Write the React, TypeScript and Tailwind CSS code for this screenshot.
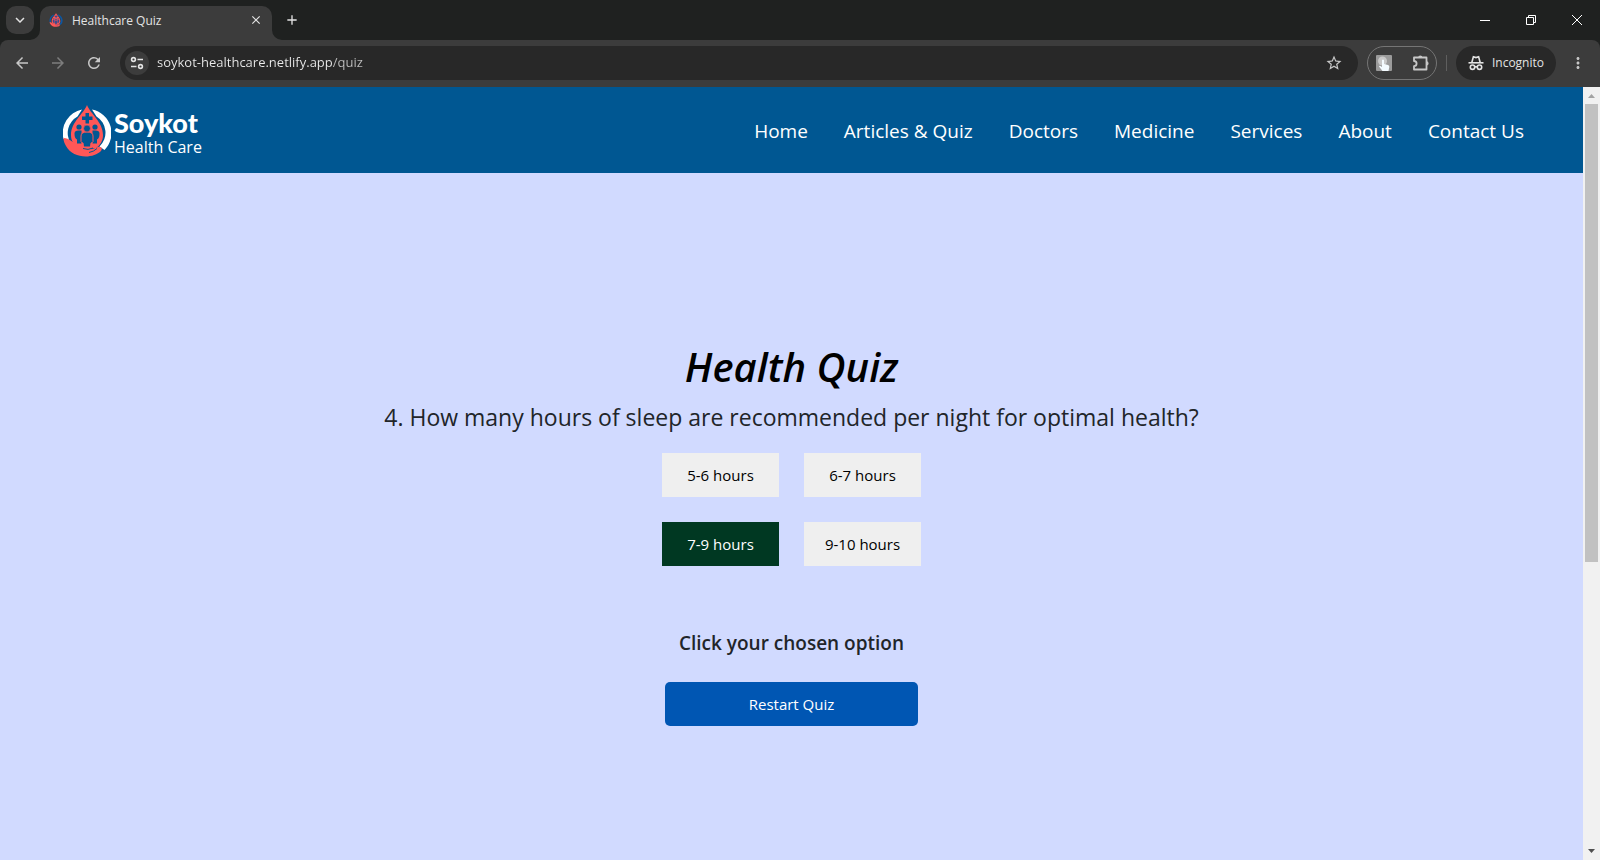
import { useState } from "react";
import type { ReactNode } from "react";
import {
  MdAdd,
  MdArrowBack,
  MdArrowForward,
  MdClose,
  MdKeyboardArrowDown,
  MdMoreVert,
  MdRefresh,
  MdStarBorder,
} from "react-icons/md";

const navLinks = ["Home", "Articles & Quiz", "Doctors", "Medicine", "Services", "About", "Contact Us"];
const options = ["5-6 hours", "6-7 hours", "7-9 hours", "9-10 hours"];

function DropMark({ className, ring, people }: { className: string; ring: string; people: string }) {
  return (
    <svg viewBox="0 0 48 52" className={className} aria-hidden="true">
      <path
        d="M19 4.500 A24 24 0 0 0 0.500 34 C4 35 6 36 7.500 38 A19 19 0 0 1 14.500 11.500 Z M29 4.500 A24 24 0 0 1 41.500 45 L36.500 41.500 A19 19 0 0 0 33.500 11.500 Z"
        fill={ring}
      />
      <path
        d="M24 0 C27.500 9 40 17 40 30 C40 36 37 40.500 33 43 L15 43 C11 40.500 8 36 8 30 C8 17 20.500 9 24 0 Z"
        fill="#ff5757"
      />
      <path
        d="M0.500 33 C7 33 12 40 18 41 L29 41 C31 43 29 44 26 45 L35 42 C38 41 40 43 38 46 C30 54 10 54 3 41 C1.500 38.500 0.500 36 0.500 33 Z"
        fill="#ff5757"
      />
      <g fill={people}>
        <path d="M22.500 8 h3.500 v3.500 h3.500 v3.500 h-3.500 v3.500 h-3.500 v-3.500 h-3.500 v-3.500 h3.500 Z" />
        <circle cx="16" cy="22" r="2.600" />
        <circle cx="32" cy="22" r="2.600" />
        <path d="M11.500 28.500 q0 -3 4 -3 h3 v13 h-4.500 v-4 q-2.500 -1 -2.500 -6 Z" />
        <path d="M36.500 28.500 q0 -3 -4 -3 h-3 v13 h4.500 v-4 q2.500 -1 2.500 -6 Z" />
        <path
          d="M18 31 q0 -4 6 -4 q6 0 6 4 v5.500 q-0.500 1.500 -2 1.500 l-0.500 4 h-7 l-0.500 -4 q-1.500 0 -2 -1.500 Z"
          stroke="#ff5757"
          strokeWidth="1"
        />
        <circle cx="24" cy="23.500" r="3.400" stroke="#ff5757" strokeWidth="0.600" />
      </g>
      <path d="M20 43.500 q5 2 10 -0.500 M26 47.500 q5 -1 8 -4" fill="none" stroke={people} strokeWidth="1" />
    </svg>
  );
}

function TuneIcon() {
  return (
    <svg viewBox="0 0 14 14" className="size-3.5" fill="none" stroke="#e3e3e3" strokeWidth="1.6" aria-hidden="true">
      <circle cx="3.500" cy="3.500" r="1.900" />
      <path d="M7.500 3.500 H13 M1 10.500 H6.500" />
      <circle cx="10.500" cy="10.500" r="1.900" />
    </svg>
  );
}

function IncognitoIcon() {
  return (
    <svg viewBox="0 0 16 16" className="size-4" fill="none" stroke="#e3e3e3" strokeWidth="1.6" aria-hidden="true">
      <path d="M0.500 7.800 H15.500" />
      <path d="M3.800 7.500 L5.400 1.800 L8 2.600 L10.600 1.800 L12.200 7.500" />
      <circle cx="4.500" cy="12.200" r="2.200" />
      <circle cx="11.500" cy="12.200" r="2.200" />
      <path d="M6.700 12 Q8 11.200 9.300 12" />
    </svg>
  );
}

function PuzzleIcon() {
  return (
    <svg viewBox="0 0 18 18" className="size-4.5" aria-hidden="true">
      <path
        d="M2 3.500 H14.500 V15.500 H2 V12.200 A2.600 2.600 0 0 0 2 7 Z"
        fill="none"
        stroke="currentColor"
        strokeWidth="1.800"
        strokeLinejoin="round"
      />
      <path d="M6.200 3.500 A2.100 2.100 0 0 1 10.400 3.500 Z M14.500 7.300 A2.100 2.100 0 0 1 14.500 11.500 Z" fill="currentColor" />
    </svg>
  );
}

function PointerExtensionIcon() {
  return (
    <svg viewBox="0 0 16 16" className="size-4" aria-hidden="true">
      <rect width="16" height="16" rx="1" fill="#9b9b9b" />
      <circle cx="6.500" cy="6" r="4.500" fill="#c9c9c9" />
      <path
        d="M6 5 q1 -1 2 0 V9 l4 1 q1.500 0.500 1.300 2 L12.500 16 H6.500 L3 11.500 q0.500 -1.200 1.500 -0.500 L6 12 Z"
        fill="#f4fbff"
      />
    </svg>
  );
}

function IconButton({ label, className, children }: { label: string; className: string; children: ReactNode }) {
  return (
    <button type="button" aria-label={label} className={`flex shrink-0 items-center justify-center ${className}`}>
      {children}
    </button>
  );
}

function TabStrip() {
  return (
    <div className="flex h-10 items-start bg-[#1f2120] text-[#e3e3e3]">
      <IconButton label="Search tabs" className="mt-1.5 ml-1.5 size-7 rounded-[10px] bg-[#3c3c3c]">
        <MdKeyboardArrowDown className="size-4.5" />
      </IconButton>
      <svg viewBox="0 0 10 10" className="ml-[-4px] size-2.5 self-end" aria-hidden="true">
        <path d="M10 0 A10 10 0 0 1 0 10 H10 Z" fill="#3c3c3c" />
      </svg>
      <div className="mt-1.5 flex h-[34px] w-58 items-center rounded-t-[10px] bg-[#3c3c3c] pr-2 pb-1.5 pl-2">
        <DropMark className="h-3.5 w-4 shrink-0" ring="#0b57a4" people="#3f4a8c" />
        <span className="ml-2 flex-1 pt-px text-xs">Healthcare Quiz</span>
        <IconButton label="Close tab" className="size-4">
          <MdClose className="size-3.5" />
        </IconButton>
      </div>
      <svg viewBox="0 0 10 10" className="size-2.5 self-end" aria-hidden="true">
        <path d="M0 0 A10 10 0 0 0 10 10 H0 Z" fill="#3c3c3c" />
      </svg>
      <IconButton label="New tab" className="mt-1.5 ml-[-4px] size-7">
        <MdAdd className="size-4" />
      </IconButton>
      <div className="ml-auto flex h-full text-white">
        <IconButton label="Minimize" className="w-[46px]">
          <svg viewBox="0 0 10 10" className="size-2.5" stroke="currentColor" fill="none">
            <path d="M0 5.500 H10" />
          </svg>
        </IconButton>
        <IconButton label="Restore" className="w-[46px]">
          <svg viewBox="0 0 10 10" className="size-2.5" stroke="currentColor" fill="none">
            <path d="M0.500 2.500 H7.500 V9.500 H0.500 Z M2.500 2.500 V0.500 H9.500 V7.500 H7.500" />
          </svg>
        </IconButton>
        <IconButton label="Close" className="w-[46px]">
          <svg viewBox="0 0 10 10" className="size-2.5" stroke="currentColor" fill="none">
            <path d="M0 0 L10 10 M10 0 L0 10" />
          </svg>
        </IconButton>
      </div>
    </div>
  );
}

function Toolbar() {
  return (
    <div className="bg-[#1f2120]">
      <div className="flex h-[47px] items-center rounded-t-lg bg-[#3c3c3c] pr-1 pb-px pl-1 text-[#c7c7c7]">
        <IconButton label="Back" className="w-9">
          <MdArrowBack className="size-4.5" />
        </IconButton>
        <IconButton label="Forward" className="w-9 text-[#7d7d7d]">
          <MdArrowForward className="size-4.5" />
        </IconButton>
        <IconButton label="Reload" className="w-9">
          <MdRefresh className="size-4.5" />
        </IconButton>
        <div className="ml-2 flex h-[34px] flex-1 items-center rounded-full bg-[#282828] pr-[15px] pl-[5px]">
          <IconButton label="View site information" className="size-6 rounded-full bg-[#3c3c3c]">
            <TuneIcon />
          </IconButton>
          <input
            type="text"
            aria-label="Address bar"
            defaultValue="soykot-healthcare.netlify.app/quiz"
            className="ml-2 min-w-0 flex-1 bg-[linear-gradient(to_right,#ececec_175px,#c0c0c0_175px)] bg-clip-text text-[13px] text-transparent outline-none"
          />
          <IconButton label="Bookmark this page" className="size-4.5">
            <MdStarBorder className="size-4.5" />
          </IconButton>
        </div>
        <div className="ml-[9px] flex h-[34px] w-[70px] items-center justify-between rounded-full border border-[#757575] pr-1.5 pl-2">
          <IconButton label="Click helper extension" className="size-4">
            <PointerExtensionIcon />
          </IconButton>
          <IconButton label="Extensions" className="size-4.5">
            <PuzzleIcon />
          </IconButton>
        </div>
        <div className="ml-[9px] h-4 w-px bg-[#5f5f5f]" />
        <div className="ml-[9px] flex h-[34px] items-center gap-2 rounded-full bg-[#282828] px-3 text-xs text-[#e3e3e3]">
          <IncognitoIcon />
          Incognito
        </div>
        <IconButton label="Browser menu" className="ml-1 w-9">
          <MdMoreVert className="size-4.5" />
        </IconButton>
      </div>
    </div>
  );
}

function SiteHeader() {
  return (
    <header className="flex h-[86px] items-center justify-between bg-[#005792] pr-[59px] pl-[63px] text-white">
      <a href="#home" className="flex items-center gap-[3px] pt-0.5">
        <DropMark className="h-13 w-12" ring="#ffffff" people="#005792" />
        <span className="flex flex-col pt-2">
          <span className="font-['Lato',sans-serif] text-[27px] leading-6 font-black">Soykot</span>
          <span className="text-base leading-6">Health Care</span>
        </span>
      </a>
      <nav className="flex gap-9 pt-0.5 text-[19px] font-medium">
        {navLinks.map((link) => (
          <a key={link} href={`#${link}`} className="whitespace-nowrap">
            {link}
          </a>
        ))}
      </nav>
    </header>
  );
}

function Quiz() {
  const [selected, setSelected] = useState("7-9 hours");
  return (
    <main className="flex flex-1 flex-col items-center bg-[#d1daff] pt-[170px] text-[#212529]">
      <h1 className="text-[40px] leading-12 font-semibold text-black italic">Health Quiz</h1>
      <p className="mt-2 text-[23px] leading-9">
        4. How many hours of sleep are recommended per night for optimal health?
      </p>
      <div className="mt-[18px] grid grid-cols-2 gap-[25px]">
        {options.map((option) => (
          <button
            key={option}
            type="button"
            onClick={() => setSelected(option)}
            className={`h-11 min-w-[117px] px-5 text-[15px] ${
              option === selected ? "bg-[#003822] text-white" : "bg-[#efefef] text-black"
            }`}
          >
            {option}
          </button>
        ))}
      </div>
      <p className="mt-[65px] text-[19px] leading-6 font-semibold">Click your chosen option</p>
      <button
        type="button"
        onClick={() => setSelected("")}
        className="mt-[27px] h-11 w-[253px] rounded-[5px] bg-[#0056b3] text-[15px] text-white"
      >
        Restart Quiz
      </button>
    </main>
  );
}

function Scrollbar() {
  return (
    <div className="flex w-[17px] shrink-0 flex-col items-center bg-[#f1f1f1]" aria-hidden="true">
      <svg viewBox="0 0 17 17" className="size-[17px] shrink-0">
        <path d="M5 11 L8.500 7 L12 11 Z" fill="#a3a3a3" />
      </svg>
      <div className="w-full flex-1 px-0.5">
        <div className="h-[62%] bg-[#c1c1c1]" />
      </div>
      <svg viewBox="0 0 17 17" className="size-[17px] shrink-0">
        <path d="M5 6 L8.500 10 L12 6 Z" fill="#505050" />
      </svg>
    </div>
  );
}

export default function App() {
  return (
    <div className="flex min-h-screen flex-col font-['Open_Sans','Noto_Sans',sans-serif]">
      <TabStrip />
      <Toolbar />
      <div className="flex flex-1">
        <div className="flex min-w-0 flex-1 flex-col">
          <SiteHeader />
          <Quiz />
        </div>
        <Scrollbar />
      </div>
    </div>
  );
}
